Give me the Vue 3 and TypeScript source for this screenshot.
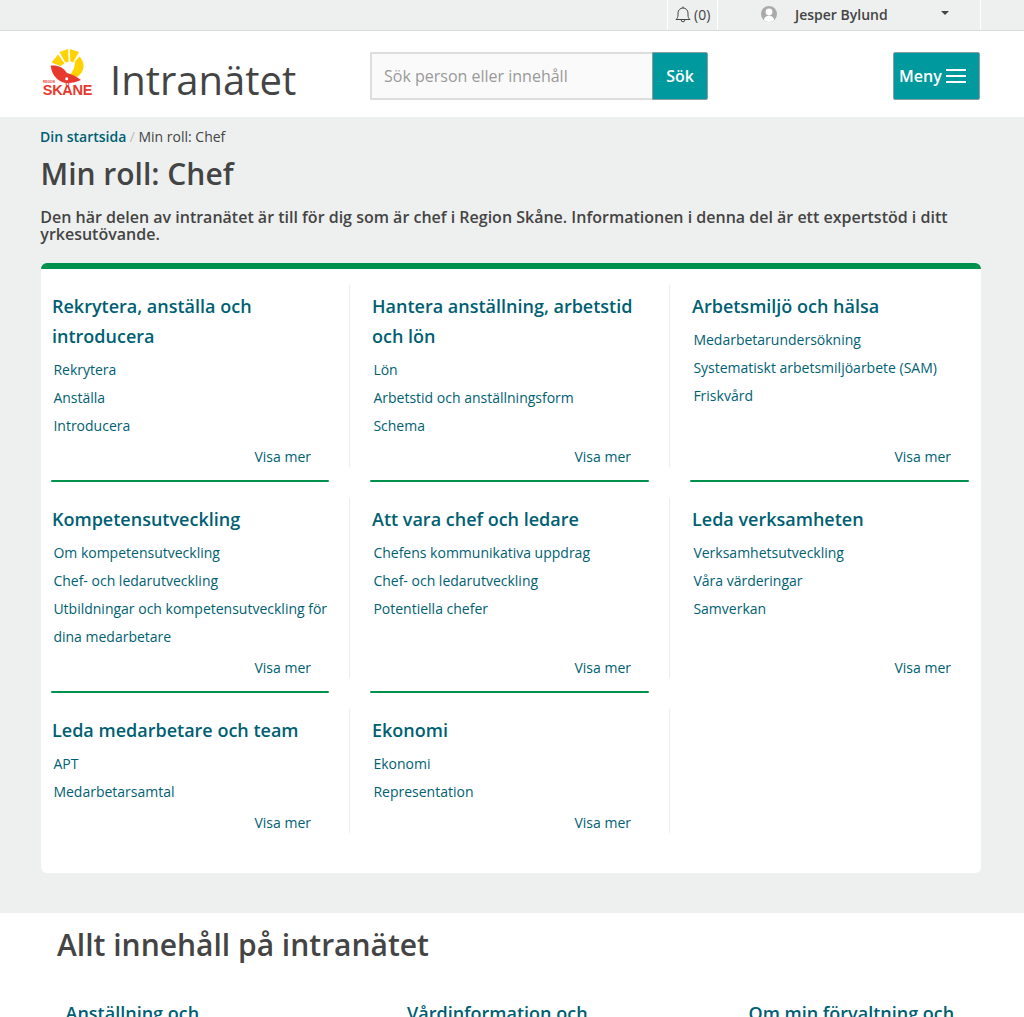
<script setup lang="ts">
interface Section { title: string; links: string[] }
const rows: Section[][] = [
  [
    { title: 'Rekrytera, anställa och introducera', links: ['Rekrytera', 'Anställa', 'Introducera'] },
    { title: 'Hantera anställning, arbetstid och lön', links: ['Lön', 'Arbetstid och anställningsform', 'Schema'] },
    { title: 'Arbetsmiljö och hälsa', links: ['Medarbetarundersökning', 'Systematiskt arbetsmiljöarbete (SAM)', 'Friskvård'] },
  ],
  [
    { title: 'Kompetensutveckling', links: ['Om kompetensutveckling', 'Chef- och ledarutveckling', 'Utbildningar och kompetensutveckling för dina medarbetare'] },
    { title: 'Att vara chef och ledare', links: ['Chefens kommunikativa uppdrag', 'Chef- och ledarutveckling', 'Potentiella chefer'] },
    { title: 'Leda verksamheten', links: ['Verksamhetsutveckling', 'Våra värderingar', 'Samverkan'] },
  ],
  [
    { title: 'Leda medarbetare och team', links: ['APT', 'Medarbetarsamtal'] },
    { title: 'Ekonomi', links: ['Ekonomi', 'Representation'] },
  ],
]
const bottomTitles = ['Anställning och', 'Vårdinformation och', 'Om min förvaltning och']
</script>

<template>
  <div class="page">
    <div class="topbar">
      <div class="tb-item tb-bell">
        <svg width="16" height="17" viewBox="0 0 16 17" fill="none" stroke="#444" stroke-width="1">
          <path d="M1 13.500c1.400-1.200 2-2.400 2-4.500V7a5 5 0 0 1 10 0v2c0 2.100.6 3.300 2 4.500z" stroke-linejoin="round" />
          <path d="M8 .5v1.500M6.200 14a1.800 1.800 0 0 0 3.600 0" />
        </svg>
        <span>(0)</span>
      </div>
      <div class="tb-item tb-user">
        <svg class="avatar" width="16" height="16" viewBox="0 0 16 16">
          <circle cx="8" cy="8" r="8" fill="#aaa" />
          <circle cx="8" cy="6" r="3.400" fill="#fff" />
          <path d="M2.800 14c.6-3 2.600-4.200 5.200-4.200s4.600 1.200 5.200 4.200A8 8 0 0 1 8 16a8 8 0 0 1-5.200-2z" fill="#fff" />
        </svg>
        <span class="name">Jesper Bylund</span>
        <span class="caret"></span>
      </div>
    </div>

    <header class="header">
      <svg class="logo" width="52" height="50" viewBox="42 48 52 50">
        <g fill="#ffd200">
          <path d="M51.500 62.500 58 54.500 64.500 63.500 60.500 66z" />
          <path d="M59.500 52 68 49 68.700 61.500 65.500 62.700z" />
          <path d="M69.800 49 79 52 73 62.500 70.300 61.300z" />
          <path d="M79.500 56.500C85 62 85.500 71 77.500 76.800 74.500 77 72 76.500 69.500 75 73 72 75 67 74.800 61.500z" />
        </g>
        <path d="M50.700 65.500C58 65 63 67 67 73 72 74.500 77 76.500 81 80 74 83.500 66 84 61 81.500 55 78.500 51.500 73 50.700 65.500z" fill="#e8392f" />
        <circle cx="66.700" cy="78.700" r="1.500" fill="#fff" />
        <text class="logo-small" x="43" y="83">REGION</text>
        <text class="logo-big" x="42.800" y="95">SKÅNE</text>
      </svg>
      <div class="site-title">Intranätet</div>
      <form class="search" @submit.prevent>
        <div class="search-input">Sök person eller innehåll</div>
        <button class="btn btn-search" type="submit">Sök</button>
      </form>
      <button class="btn btn-menu" type="button">
        <span>Meny</span>
        <span class="burger"><i></i><i></i><i></i></span>
      </button>
    </header>

    <main class="main">
      <nav class="crumbs">
        <a class="crumb-link">Din startsida</a>
        <span class="sep">/</span>
        <span>Min roll: Chef</span>
      </nav>
      <h1 class="h1">Min roll: Chef</h1>
      <p class="lead">Den här delen av intranätet är till för dig som är chef i Region Skåne. Informationen i denna del är ett expertstöd i ditt yrkesutövande.</p>

      <section class="card">
        <div v-for="(row, r) in rows" :key="r" class="grid-row" :class="{ spaced: r < 2 }">
          <div v-for="(sec, c) in row" :key="c" class="cell" :class="{ underline: r < 2 && !(r === 1 && c === 2) }">
            <div class="cell-inner">
              <h2 class="cell-title">{{ sec.title }}</h2>
              <ul class="links">
                <li v-for="l in sec.links" :key="l">{{ l }}</li>
              </ul>
              <a class="more">Visa mer</a>
            </div>
          </div>
        </div>
      </section>
    </main>

    <section class="all">
      <h2 class="all-title">Allt innehåll på intranätet</h2>
      <div class="all-cols">
        <h3 v-for="t in bottomTitles" :key="t" class="all-item">{{ t }}</h3>
      </div>
    </section>
  </div>
</template>

<style>
html, body { margin: 0; background: #eef0ef; }
</style>

<style scoped>
.page {
  height: 1017px;
  overflow: hidden;
  background: #eef0ef;
  font-family: "Open Sans", "Liberation Sans", sans-serif;
  color: #444;
}
.topbar {
  height: 30px;
  border-bottom: 1px solid #d9dcdc;
  display: flex;
  justify-content: flex-end;
  padding-right: 43px;
  font-size: 14px;
}
.tb-item {
  display: flex;
  align-items: center;
  border-left: 1px solid #fff;
  box-sizing: border-box;
  padding-bottom: 2px;
}
.tb-bell {
  width: 50px;
  padding-left: 6.500px;
  gap: 3.500px;
}
.tb-user {
  width: 264px;
  padding-left: 43px;
  border-right: 1px solid #fff;
}
.name {
  margin-left: 18px;
  font-weight: 600;
  width: 146px;
}
.caret {
  width: 0;
  height: 0;
  border-left: 4px solid transparent;
  border-right: 4px solid transparent;
  border-top: 4px solid #444;
  margin-top: -2px;
}
.header {
  height: 86px;
  box-sizing: border-box;
  background: #fff;
  display: flex;
  align-items: center;
  padding: 4px 44px 0 42px;
}
.logo { flex: none; margin-top: -6px; }
.logo-small { font: 700 3px "Liberation Sans", sans-serif; fill: #e8392f; }
.logo-big { font: 700 14.500px "Liberation Sans", sans-serif; letter-spacing: -.3px; fill: #e8392f; }
.site-title {
  font-size: 40px;
  line-height: 54px;
  margin-left: 16px;
  width: 260px;
  margin-top: 8px;
}
.search {
  display: flex;
  height: 48px;
  margin: 0;
}
.search-input {
  width: 282px;
  box-sizing: border-box;
  background: #fafafa;
  border: 2px solid #ddd;
  border-right: 0;
  border-radius: 2px 0 0 2px;
  padding-left: 12px;
  line-height: 44px;
  font-size: 16px;
  color: #999;
}
.btn {
  background: #009a9e;
  border: 1px solid #8f9c9d;
  border-radius: 2px;
  color: #fff;
  font: 600 16px "Open Sans", sans-serif;
  height: 48px;
  padding: 0;
}
.btn-search { width: 56px; border-radius: 0 2px 2px 0; }
.btn-menu {
  width: 87px;
  margin-left: auto;
  padding-left: 5px;
  display: flex;
  align-items: center;
  gap: 4px;
}
.burger { display: flex; flex-direction: column; gap: 4px; }
.burger i { display: block; width: 20px; height: 2px; background: #fff; }
.main { padding: 10px 43px 40px 41px; }
.crumbs { font-size: 14px; line-height: 20px; margin-left: -1px; }
.crumb-link { font-weight: 600; color: #005f73; }
.sep { color: #bbb; margin: 0 3.500px; }
.h1 {
  margin: 6px 0 0 -.5px;
  font-size: 30px;
  line-height: 42px;
  font-weight: 600;
}
.lead {
  margin: 14px 0 0 -.7px;
  font-size: 16px;
  line-height: 17px;
  font-weight: 600;
}
.card {
  margin-top: 20px;
  background: #fff;
  border-top: 6px solid #00914c;
  border-radius: 6px;
  padding: 16px 0 40px;
}
.grid-row {
  display: grid;
  grid-template-columns: repeat(3, 320px);
  margin-left: -11px;
}
.spaced { margin-bottom: 16px; }
.spaced .cell { padding-bottom: 15px; }
.cell {
  padding-left: 20px;
  box-sizing: border-box;
  display: flex;
  flex-direction: column;
  position: relative;
}
.cell-inner {
  flex: 1;
  display: flex;
  flex-direction: column;
  border-right: 1px solid #eceeee;
  padding: 6px 0 0 2px;
}
.cell:nth-child(3) .cell-inner { border-right-color: transparent; }
.underline::after {
  content: "";
  position: absolute;
  left: 20px;
  right: 21px;
  bottom: 0;
  height: 2px;
  border-radius: 1px;
  background: #00914c;
}
.cell:first-child.underline::after { left: 21px; }
.cell-title {
  margin: 0 16px 5px 0;
  font-size: 18px;
  line-height: 30px;
  font-weight: 600;
  color: #005f73;
}
.links {
  list-style: none;
  margin: 0;
  padding: 0 16px 0 1.400px;
  font-size: 14px;
  line-height: 28px;
  color: #005f73;
}
.more {
  margin-top: auto;
  padding: 7px 38px 0 0;
  text-align: right;
  font-size: 14px;
  line-height: 20px;
  color: #005f73;
}
.all { background: #fff; padding: 7px 16px 0 57px; height: 200px; }
.all-title {
  margin: 0;
  font-size: 30px;
  line-height: 50px;
  font-weight: 600;
}
.all-cols { display: grid; grid-template-columns: repeat(3, 341.500px); margin-top: 30px; padding-left: 8.500px; }
.all-item {
  margin: 0;
  font-size: 18px;
  line-height: 26px;
  font-weight: 600;
  color: #005f73;
}
</style>
